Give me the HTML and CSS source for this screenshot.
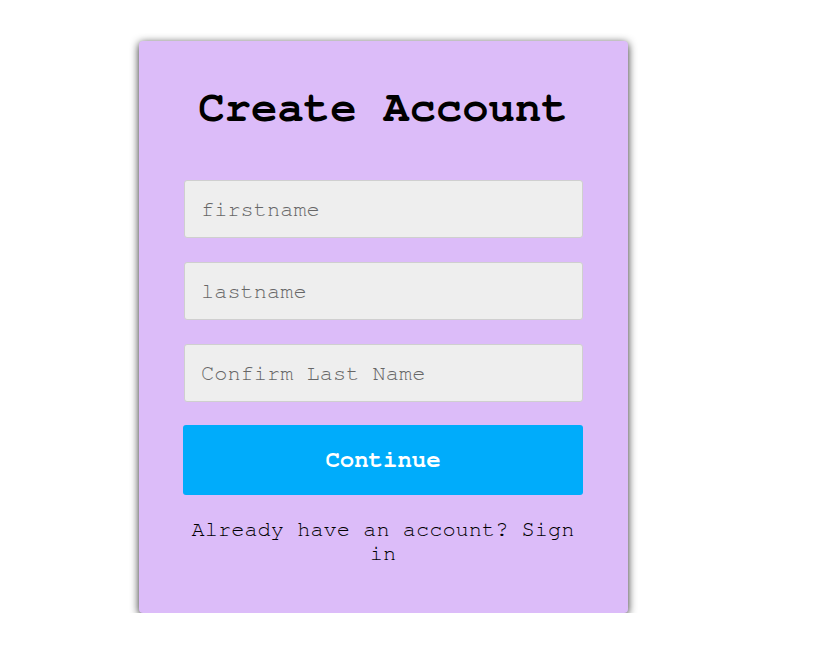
FILE: index.html
```html
<!DOCTYPE html>
<html lang="en">
<head>
<meta charset="utf-8">
<title>Create Account</title>
<link rel="stylesheet" href="styles.css">
</head>
<body>
<div class="card">
  <h1 class="title">Create Account</h1>
  <form class="form">
    <input class="field" type="text" placeholder="firstname">
    <input class="field" type="text" placeholder="lastname">
    <input class="field" type="text" placeholder="Confirm Last Name">
    <button class="btn" type="button">Continue</button>
  </form>
  <p class="note">Already have an account? Sign in</p>
</div>
</body>
</html>
```
FILE: styles.css
```css
* { box-sizing: border-box; }
html, body { margin: 0; padding: 0; background: #ffffff; }
body {
  font-family: "Nimbus Mono PS", "Nimbus Mono L", "FreeMono", "Courier New", "Liberation Mono", monospace;
  padding: 41px 0 0 139px;
}
.card {
  width: 489px;
  background: #dcbcf9;
  border-radius: 4px;
  box-shadow: 0 2px 8px rgba(0, 0, 0, 0.85);
  padding: 42px 45px 48px 44px;
}
.title {
  margin: 0;
  font-size: 44px;
  line-height: 50px;
  font-weight: bold;
  text-align: center;
  color: #000;
}
.form {
  margin-top: 47px;
  display: flex;
  flex-direction: column;
}
.field {
  display: block;
  width: 399px;
  height: 58px;
  margin: 0 0 24px 1px;
  padding: 0 16px;
  font-family: inherit;
  font-size: 22px;
  color: #222;
  background: #eeeeee;
  border: 1px solid #cfcfcf;
  border-radius: 3px;
  outline: none;
}
.field:nth-of-type(3) { margin-bottom: 23px; }
.field::placeholder { color: #666666; }
.btn {
  width: 400px;
  height: 70px;
  border: none;
  border-radius: 3px;
  background: #00acfb;
  color: #ffffff;
  font-family: inherit;
  font-size: 24px;
  font-weight: bold;
  cursor: pointer;
}
.note {
  margin: 22px 0 0;
  font-size: 22px;
  line-height: 24px;
  text-align: center;
  color: #000;
}
```
